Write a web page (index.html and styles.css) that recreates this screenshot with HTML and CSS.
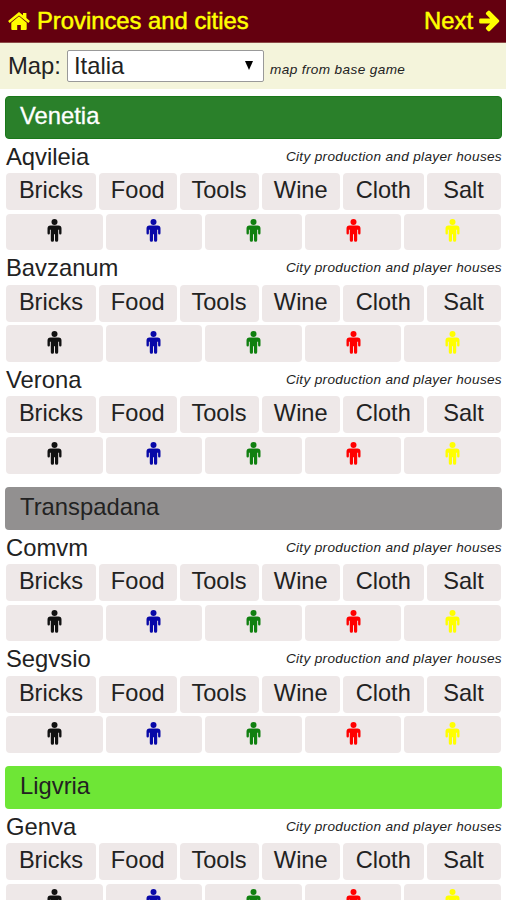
FILE: index.html
```html
<!DOCTYPE html>
<html lang="en">
<head>
<meta charset="utf-8">
<title>Provinces and cities</title>
<link rel="stylesheet" href="styles.css">
</head>
<body>
<svg class="defs" width="0" height="0" aria-hidden="true">
  <symbol id="man" viewBox="0 0 15 23">
    <circle cx="7.500" cy="3.100" r="3"/>
    <path d="M3.500 6.500h8a3 3 0 0 1 3 3v4.800a1.200 1.200 0 0 1-2.400 0v-3.600h-.9v10.500a1.400 1.400 0 0 1-3.200 0v-6H7v6a1.400 1.400 0 0 1-3.200 0V10.700h-.9v3.600a1.200 1.200 0 0 1-2.400 0V9.500a3 3 0 0 1 3-3z"/>
  </symbol>
</svg>
<header class="topbar">
  <a class="home"><svg class="home-icon" viewBox="0 0 22 18"><path d="M11 4.300 18.700 10.800V17a1 1 0 0 1-1 1h-4.900v-5H9.200v5H4.300a1 1 0 0 1-1-1v-6.200z"/><path d="M11 0l4 3.300V1h3.400v5l3.500 3.100-1.500 1.800L11 3.400l-9.400 7.500L.1 9.100z"/></svg><span>Provinces and cities</span></a>
  <a class="next"><span>Next</span><svg class="next-icon" viewBox="0 0 22 22"><path d="M1.500 8.500h10.200L7.600 4.300a1.500 1.500 0 0 1 0-2.100L9.300.6a1.500 1.500 0 0 1 2.100 0l9.400 9.300a1.500 1.500 0 0 1 0 2.200l-9.400 9.300a1.500 1.500 0 0 1-2.100 0l-1.700-1.700a1.500 1.500 0 0 1 0-2.100l4.100-4.100H1.500A1.300 1.300 0 0 1 .2 12.200V9.800a1.300 1.300 0 0 1 1.300-1.300z"/></svg></a>
</header>
<div class="mapbar">
  <span class="map-label">Map:</span>
  <div class="select"><span>Italia</span><svg class="caret" viewBox="0 0 8 9"><path d="M0 0h8L4 9z"/></svg></div>
  <em class="hint">map from base game</em>
</div>
<main id="provinces"></main>
<script src="app.js"></script>
</body>
</html>
```
FILE: styles.css
```css
* { box-sizing: border-box; }
body {
  margin: 0;
  height: 900px;
  overflow: hidden;
  background: #fff;
  color: #222;
  font-family: "Liberation Sans", Arial, sans-serif;
  font-size: 23.8px;
  line-height: 28px;
}
.defs { position: absolute; }
svg { fill: currentColor; display: block; flex: none; }
.topbar {
  height: 43px;
  display: flex;
  justify-content: space-between;
  padding: 0 6px 0 8px;
  background: #64000f;
  border-bottom: 1px solid #8d4a48;
  color: #ff0;
  -webkit-text-stroke: 0.5px;
}
.home, .next { display: flex; align-items: center; }
.home { gap: 7px; }
.next { gap: 6px; }
.home-icon { width: 22px; height: 18px; }
.next-icon { width: 21px; height: 22px; }
.mapbar {
  height: 46px;
  display: flex;
  align-items: center;
  padding: 0 8px;
  background: #f4f4db;
}
.map-label { width: 59px; }
.select {
  width: 197px;
  height: 32px;
  display: flex;
  align-items: center;
  justify-content: space-between;
  padding: 0 10px 0 6px;
  background: #fff;
  border: 1px solid #999;
  border-radius: 2px;
}
.caret { width: 8px; height: 9px; margin-top: -2px; color: #000; }
.hint, .caption { font-size: 13.6px; line-height: 18px; font-style: italic; letter-spacing: 0.32px; }
.hint { margin: 7px 0 0 6px; letter-spacing: 0.38px; }
#provinces { padding: 7px 4px 0 5px; }
.province { padding-bottom: 13.5px; }
.banner {
  height: 42.5px;
  padding: 6px 15px;
  border-radius: 4px;
}
.venetia { background: #2a802a; border: 1px solid #1a781a; padding: 5px 14px; color: #fff; -webkit-text-stroke: 0.3px; }
.transpadana { background: #929090; }
.ligvria { background: #6ee636; }
.city-head {
  height: 34.5px;
  display: flex;
  align-items: flex-start;
  justify-content: space-between;
  padding: 4px 0 0 1px;
}
.caption { padding-top: 5px; }
.goods, .houses { display: grid; gap: 3px; margin: 0 0 0 1px; }
.goods { grid-template-columns: 90px 77.5px 79px 78.5px 80.5px 74px; height: 37px; }
.houses { grid-template-columns: repeat(5, 1fr); height: 36.7px; margin-top: 3.5px; padding-right: 1px; }
.tile {
  display: flex;
  align-items: center;
  justify-content: center;
  padding-bottom: 3px;
  background: #eee8e8;
  border-radius: 4px;
  font-size: 23.6px;
}
.man { width: 15px; height: 23px; }
.black { color: #111; }
.blue { color: #0808a8; }
.green { color: #108010; }
.red { color: #f00; }
.yellow { color: #ff0; }
```
FILE: app.js
```js
const provinces = [
  ["Venetia", ["Aqvileia", "Bavzanum", "Verona"]],
  ["Transpadana", ["Comvm", "Segvsio"]],
  ["Ligvria", ["Genva"]]
];
const goods = ["Bricks", "Food", "Tools", "Wine", "Cloth", "Salt"];
const players = ["black", "blue", "green", "red", "yellow"];

const city = name => `
  <div class="city">
    <div class="city-head"><span>${name}</span><em class="caption">City production and player houses</em></div>
    <div class="goods">${goods.map(g => `<div class="tile">${g}</div>`).join("")}</div>
    <div class="houses">${players.map(p => `<div class="tile ${p}"><svg class="man"><use href="#man"/></svg></div>`).join("")}</div>
  </div>`;

document.getElementById("provinces").innerHTML = provinces.map(([name, cities]) => `
  <section class="province">
    <div class="banner ${name.toLowerCase()}">${name}</div>
    ${cities.map(city).join("")}
  </section>`).join("");
```
